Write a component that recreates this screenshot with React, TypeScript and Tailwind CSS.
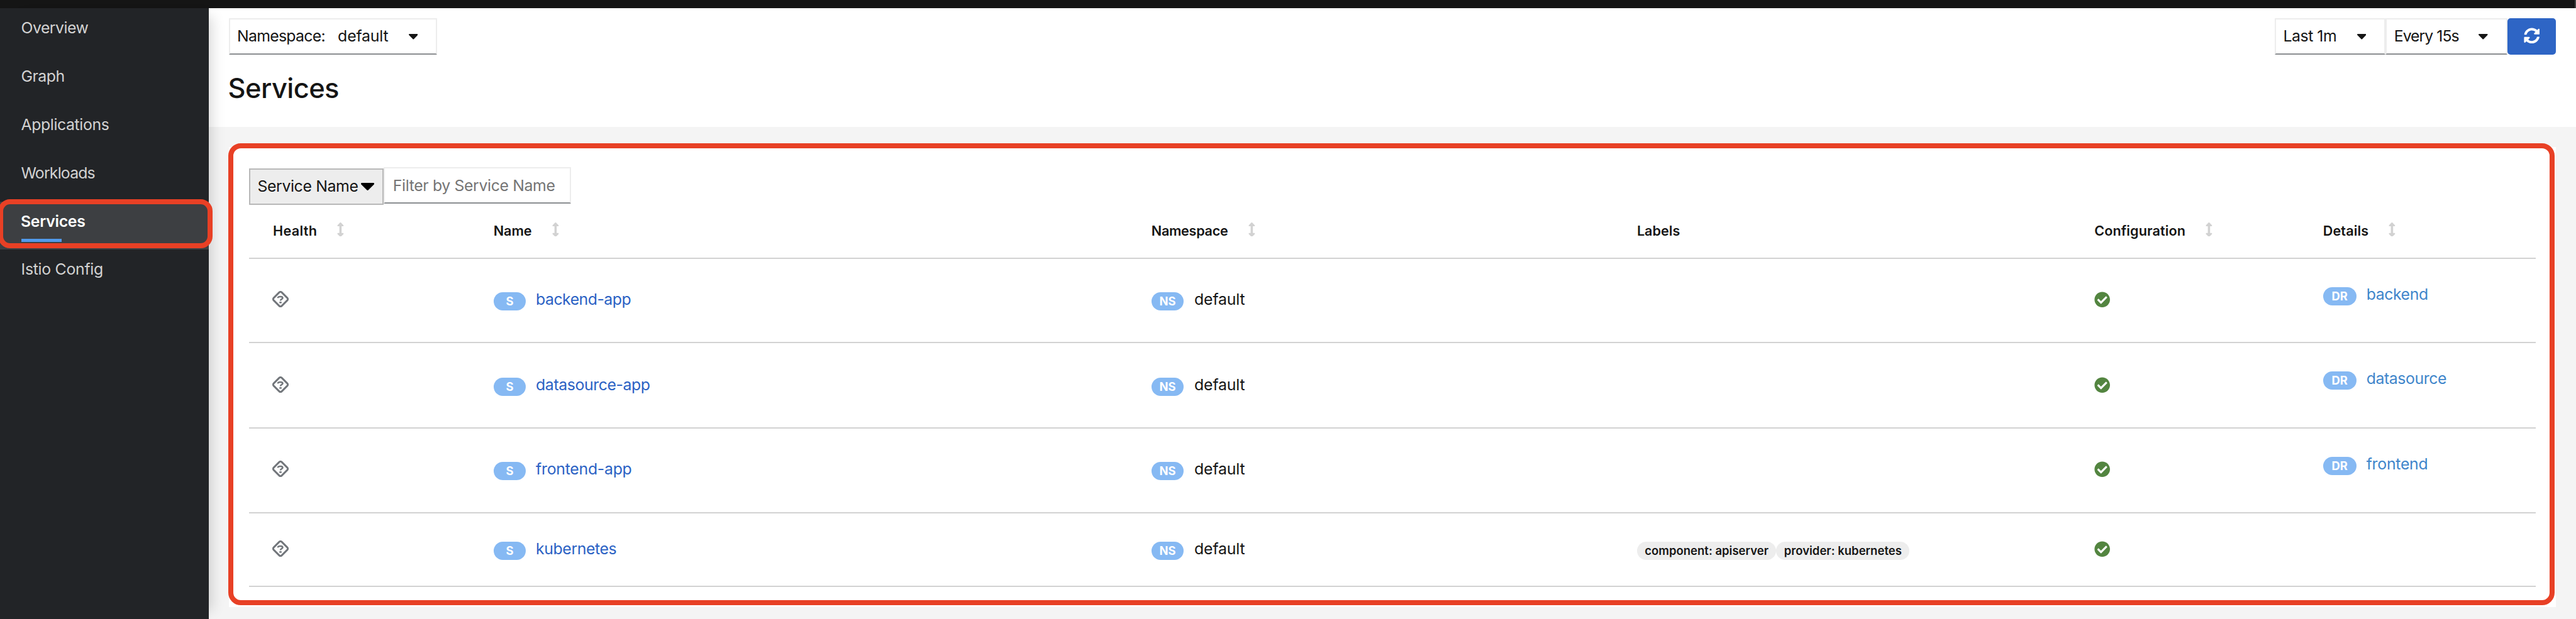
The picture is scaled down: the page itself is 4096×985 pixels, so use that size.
import type { ReactNode } from "react";
import { FaArrowsAltV, FaCheckCircle, FaSyncAlt } from "react-icons/fa";

const COLUMNS = "grid grid-cols-[350.8px_1046px_772.1px_727.3px_363.6px_1fr]";

const navItems = [
  { label: "Overview", tracking: "tracking-[-0.5px]" },
  { label: "Graph", tracking: "tracking-[-0.5px]" },
  { label: "Applications", tracking: "tracking-[-0.39px]" },
  { label: "Workloads", tracking: "tracking-[-0.81px]" },
  { label: "Services", tracking: "tracking-[-0.28px]", active: true },
  { label: "Istio Config", tracking: "tracking-[-0.27px]" },
];

const headers = [
  { label: "Health", sortable: true, tracking: "tracking-[0.31px]" },
  { label: "Name", sortable: true, tracking: "tracking-[-0.1px]" },
  { label: "Namespace", sortable: true, tracking: "tracking-[-0.3px]" },
  { label: "Labels", sortable: false, tracking: "tracking-normal" },
  { label: "Configuration", sortable: true, tracking: "tracking-[0.1px]" },
  { label: "Details", sortable: true, tracking: "tracking-[0.1px]" },
];

type Service = {
  name: string;
  tracking: string;
  row: string;
  labels: string[];
  detail?: { name: string; tracking: string; offset: string };
};

const services: Service[] = [
  {
    name: "backend-app",
    tracking: "tracking-[-0.5px]",
    row: "h-[134px] pt-[2px]",
    labels: [],
    detail: { name: "backend", tracking: "tracking-[-0.4px]", offset: "pt-[43px]" },
  },
  {
    name: "datasource-app",
    tracking: "tracking-[-0.4px]",
    row: "h-[136px] pt-[4px]",
    labels: [],
    detail: { name: "datasource", tracking: "tracking-[-0.4px]", offset: "pt-[41px]" },
  },
  {
    name: "frontend-app",
    tracking: "tracking-[-0.25px]",
    row: "h-[135px] pt-[2px]",
    labels: [],
    detail: { name: "frontend", tracking: "tracking-[-0.25px]", offset: "pt-[43px]" },
  },
  {
    name: "kubernetes",
    tracking: "tracking-[-0.4px]",
    row: "h-[117px] pt-[3px]",
    labels: ["component: apiserver", "provider: kubernetes"],
  },
];

function Caret({ className }: { className: string }) {
  return (
    <svg viewBox="12 192 296 169" preserveAspectRatio="none" fill="currentColor" className={className}>
      <path d="M31.3 192h257.3c17.8 0 26.7 21.5 14.1 34.1L174.1 354.8c-7.8 7.8-20.5 7.8-28.3 0L17.2 226.1C4.6 213.5 13.5 192 31.3 192z" />
    </svg>
  );
}

function UnknownHealth() {
  return (
    <svg viewBox="0 0 32 32" fill="none" stroke="#72767b" className="-mt-[7px] -ml-[0.5px] size-[26px]">
      <rect x="4.9" y="4.9" width="22.2" height="22.2" rx="3.3" transform="rotate(45 16 16)" strokeWidth="3.6" />
      <path d="M10.6 13.9C11 11.6 13.2 11 15.8 11C18.8 11 20.3 12.1 20.3 13.7C20.3 16 16 15.6 16 19" strokeWidth="3.1" />
      <path d="M13.8 22.6h4.4" strokeWidth="3.1" />
    </svg>
  );
}

function Badge({ children, className }: { children: ReactNode; className: string }) {
  return (
    <span className={`flex h-[29px] items-center justify-center rounded-full bg-[#86b9f3] text-[18.4px] leading-none font-bold text-white ${className}`}>
      {children}
    </span>
  );
}

function Select({ className, children }: { className: string; children: ReactNode }) {
  return (
    <div className={`flex h-[58px] items-center border-2 border-[#ededed] border-b-[#8a8d90] pr-[29px] pb-[2px] pl-[11.5px] ${className}`}>
      {children}
      <Caret className="mt-[3px] ml-auto h-[8.5px] w-[14.6px]" />
    </div>
  );
}

function Sidebar() {
  return (
    <nav className="relative z-10 w-[331.6px] shrink-0 bg-[#222427] shadow-[19px_0_19px_-13px_rgba(3,3,3,0.14)]">
      {navItems.map((item) =>
        item.active ? (
          <div key={item.label} className="relative h-[76.9px] bg-[#3d3f42] pl-[33px]">
            <div className={`flex h-[62px] items-center font-semibold text-white ${item.tracking}`}>{item.label}</div>
            <div className="absolute top-[59px] left-[33.6px] h-[5px] w-[64px] bg-[#519aeb]" />
            <div className="absolute top-[-4px] left-[-3px] h-[78px] w-[341px] rounded-[19px] border-8 border-[#e84025]" />
          </div>
        ) : (
          <div key={item.label} className="h-[76.9px] pl-[33.5px]">
            <div className={`flex h-[62px] items-center text-[#d2d2d2] ${item.tracking}`}>{item.label}</div>
          </div>
        ),
      )}
    </nav>
  );
}

function PageHeader() {
  return (
    <header className="h-[189px] bg-white px-[32px] pt-[16px]">
      <div className="flex justify-between">
        <Select className="w-[331.6px]">
          <span className="w-[160px] tracking-[-0.72px]">Namespace:</span>
          <span className="tracking-[-0.15px]">default</span>
        </Select>
        <div className="flex">
          <Select className="w-[176.2px]">
            <span className="tracking-[-0.47px]">Last 1m</span>
          </Select>
          <Select className="w-[193.8px]">
            <span className="tracking-[-0.98px]">Every 15s</span>
          </Select>
          <button className="flex h-[58px] w-[77px] items-center justify-center rounded-[5px] bg-[#2e65c5] pb-[3px] text-white">
            <FaSyncAlt className="size-[25.6px]" />
          </button>
        </div>
      </div>
      <h1 className="mt-[23px] -ml-[1px] flex h-[60px] items-center text-[43.4px] font-medium tracking-[-0.55px]">Services</h1>
    </header>
  );
}

function ServicesCard() {
  return (
    <section className="relative mx-[32px] mt-[32px] h-[732px] bg-white px-[32px] pt-[32px]">
      <div className="flex h-[60px] items-start">
        <div className="mt-[2px] flex h-[58px] w-[214.7px] items-center justify-between border-2 border-[#b8b8b8] bg-[#ededed] pr-[13px] pb-[2px] pl-[11.8px]">
          <span className="tracking-[-0.36px]">Service Name</span>
          <Caret className="mt-[2px] h-[12px] w-[21px] text-black" />
        </div>
        <div className="flex h-[58px] w-[298px] items-center border-2 border-[#ededed] border-b-[#8a8d90] pl-[12.5px] tracking-[-0.36px] text-[#757575]">
          Filter by Service Name
        </div>
      </div>
      <div className={`${COLUMNS} h-[86px] items-center border-b-2 border-[#d2d2d2] pb-[2px] text-[21.6px] font-semibold`}>
        {headers.map((h) => (
          <div key={h.label} className="flex items-center pl-[38.4px]">
            <span className={h.tracking}>{h.label}</span>
            {h.sortable && <FaArrowsAltV className="-mt-[4px] ml-[26.3px] size-[22.8px] text-[#d2d2d2]" />}
          </div>
        ))}
      </div>
      {services.map((s) => (
        <div key={s.name} className={`${COLUMNS} items-center border-b-2 border-[#d2d2d2] ${s.row}`}>
          <div className="pl-[38.4px]">
            <UnknownHealth />
          </div>
          <div className="flex items-center gap-[16px] pl-[38.4px]">
            <Badge className="w-[51.3px]">S</Badge>
            <a className={`-mt-[7px] text-[#2b62c4] ${s.tracking}`}>{s.name}</a>
          </div>
          <div className="flex items-center gap-[17px] pl-[38.4px]">
            <Badge className="w-[51.3px]">NS</Badge>
            <span className="-mt-[7px] tracking-[-0.15px]">default</span>
          </div>
          <div className="flex pl-[38.4px]">
            {s.labels.map((label) => (
              <span key={label} className="flex h-[29px] items-center rounded-full bg-[#ededed] px-[12.4px] text-[18.5px] font-semibold">
                {label}
              </span>
            ))}
          </div>
          <div className="pl-[38.4px]">
            <FaCheckCircle className="-mt-[5px] size-[25.4px] text-[#538540]" />
          </div>
          {s.detail && (
            <div className={`flex h-full items-start pl-[38.4px] ${s.detail.offset}`}>
              <div className="flex items-center gap-[16px]">
                <Badge className="w-[52.9px]">DR</Badge>
                <a className={`-mt-[7px] text-[#4086cb] ${s.detail.tracking}`}>{s.detail.name}</a>
              </div>
            </div>
          )}
        </div>
      ))}
      <div className="pointer-events-none absolute top-[-6px] right-[2px] bottom-[3px] left-[-1px] rounded-[20px] border-8 border-[#e84025]" />
    </section>
  );
}

export default function App() {
  return (
    <div className="flex h-[985px] w-[4096px] flex-col overflow-hidden bg-[#f4f4f4] font-['Inter',sans-serif] text-[24.8px] leading-[30px] text-[#151515]">
      <div className="h-[13px] shrink-0 border-r-2 border-[#444] bg-[#151515]" />
      <div className="flex grow">
        <Sidebar />
        <main className="min-w-0 grow">
          <PageHeader />
          <ServicesCard />
        </main>
      </div>
    </div>
  );
}
